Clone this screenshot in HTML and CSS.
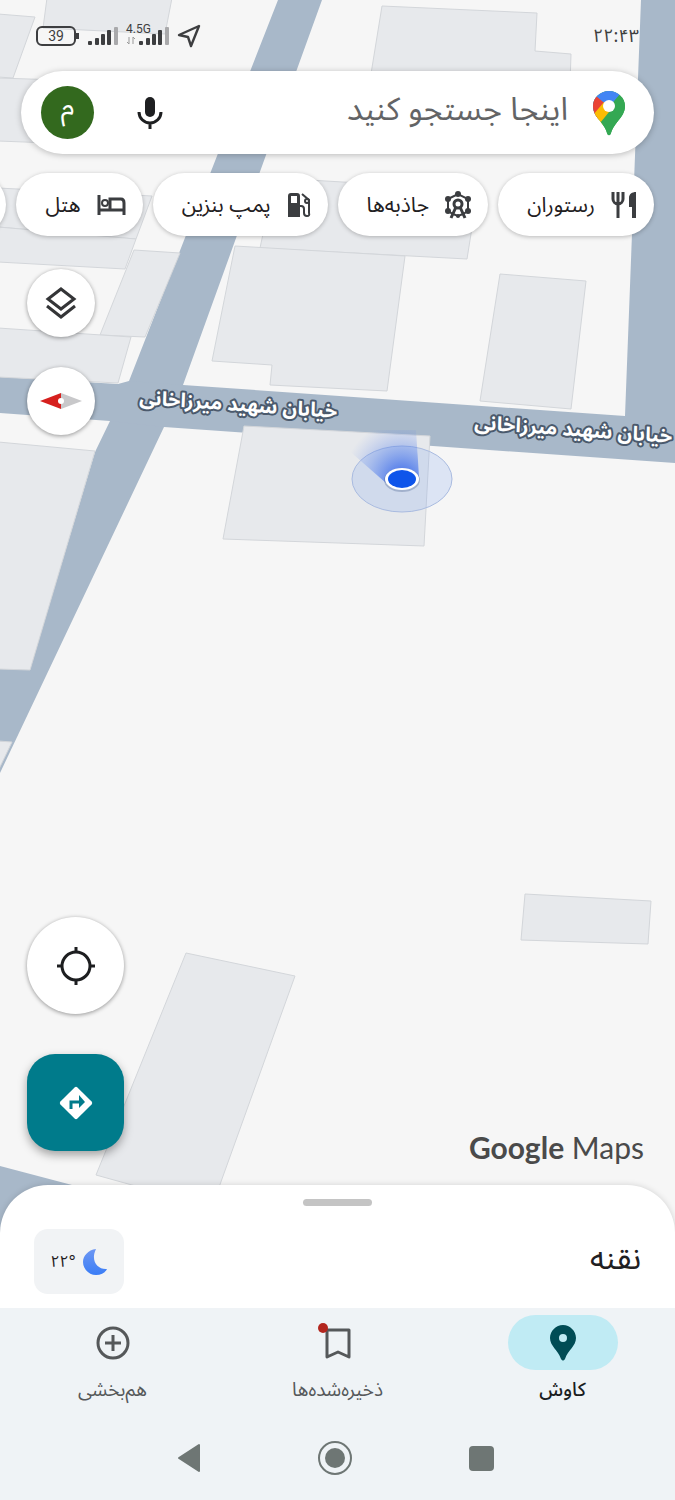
FILE: index.html
```html
<!DOCTYPE html>
<html lang="fa" dir="rtl">

<head>
  <meta charset="UTF-8">
  <meta name="viewport" content="width=device-width, initial-scale=1.0">
  <title>Google Maps</title>
  <link rel="stylesheet" href="styles.css">
</head>

<body>

  <!-- Map background -->
  <svg class="map" viewBox="0 0 675 1500" preserveAspectRatio="xMidYMin slice" role="img" aria-label="نقشه">
    <defs>
      <radialGradient id="beam" gradientUnits="userSpaceOnUse" cx="402" cy="479" r="58">
        <stop offset="0.2" stop-color="#2f62ea" stop-opacity="0.7"></stop>
        <stop offset="0.6" stop-color="#4a78ec" stop-opacity="0.3"></stop>
        <stop offset="1" stop-color="#6f92ee" stop-opacity="0"></stop>
      </radialGradient>
    </defs>

    <g class="road">
      <polygon points="278,0 322,0 183,385 164,427 0,773 0,669 30,669 95,452 110,421 129,381"></polygon>
      <polygon points="0,377 118,384 129,381 183,385 625,416 641,0 675,0 675,463 164,427 110,421 0,413"></polygon>
      <polygon points="0,1166 72,1185 72,1260 0,1260"></polygon>
    </g>

    <g class="building">
      <polygon points="47,-2 172,-2 165,34 43,28"></polygon>
      <polygon points="-2,14 35,17 13,78 -2,77"></polygon>
      <polygon points="-2,78 60,80 50,143 -2,141"></polygon>
      <polygon points="382,6 537,13 535,51 571,54 570,84 370,80"></polygon>
      <polygon points="-2,188 152,196 136,239 -2,227"></polygon>
      <polygon points="-2,227 136,239 125,269 -2,262"></polygon>
      <polygon points="134,250 180,253 145,337 100,335"></polygon>
      <polygon points="275,178 478,190 467,259 260,248"></polygon>
      <polygon points="235,246 405,256 387,391 270,385 272,365 212,361"></polygon>
      <polygon points="500,274 586,281 571,409 480,401"></polygon>
      <polygon points="-2,328 131,337 118,383 -2,377"></polygon>
      <polygon points="-2,442 95,451 30,670 -2,669"></polygon>
      <polygon points="-2,741 12,742 -2,771"></polygon>
      <polygon points="244,426 430,436 424,546 223,539"></polygon>
      <polygon points="525,894 651,901 648,944 521,940"></polygon>
      <polygon points="186,953 295,976 218,1190 150,1190 96,1175"></polygon>
    </g>

    <!-- Current location -->
    <ellipse class="accuracy" cx="402" cy="479" rx="50" ry="33"></ellipse>
    <polygon points="386,483 346,448 362,430 416,430 419,477" fill="url(#beam)"></polygon>
    <ellipse cx="402" cy="480" rx="18" ry="12" fill="#4c6392" opacity="0.35"></ellipse>
    <ellipse cx="402" cy="479" rx="17" ry="11" fill="#fff"></ellipse>
    <ellipse cx="402" cy="479" rx="14" ry="9" fill="#0f55ea"></ellipse>

    <text class="street" x="238" y="411" transform="rotate(4 238 408)">خیابان شهید میرزاخانی</text>
    <text class="street" x="573" y="436" transform="rotate(4 573 433)">خیابان شهید میرزاخانی</text>
  </svg>

  <div class="app">

    <header class="status">
      <time>۲۲:۴۳</time>
      <div class="status-icons">
        <span class="battery">39</span>
        <svg width="30" height="20" viewBox="0 0 30 20">
          <g fill="#3d3e40">
            <rect x="0" y="15" width="4" height="4" rx="1"></rect>
            <rect x="7" y="12" width="4" height="7" rx="1"></rect>
            <rect x="13" y="8" width="4" height="11" rx="1"></rect>
            <rect x="19" y="4" width="4" height="15" rx="1"></rect>
          </g>
          <rect x="26" y="1" width="4" height="18" rx="1" fill="#a9a9ab"></rect>
        </svg>
        <span class="network">
          <span class="network-type">4.5G</span>
          <svg width="43" height="20" viewBox="0 0 43 20">
            <path d="M3 11v7M1 16l2 2M7 18v-7l2 2" fill="none" stroke="#999" stroke-width="1"></path>
            <g fill="#3d3e40">
              <rect x="13" y="15" width="4" height="4" rx="1"></rect>
              <rect x="20" y="12" width="4" height="7" rx="1"></rect>
              <rect x="26" y="8" width="4" height="11" rx="1"></rect>
              <rect x="32" y="4" width="4" height="15" rx="1"></rect>
            </g>
            <rect x="39" y="1" width="4" height="18" rx="1" fill="#a9a9ab"></rect>
          </svg>
        </span>
        <svg width="24" height="24" viewBox="0 0 24 24">
          <path d="M22 2L2 11L11 13L14 22Z" fill="none" stroke="#3d3e40" stroke-width="2.4" stroke-linejoin="round"></path>
        </svg>
      </div>
    </header>

    <form class="search">
      <svg width="34" height="46" viewBox="0 0 34 46">
        <clipPath id="pin">
          <path d="M17 1C8 1 1 8 1 16c0 6 3 10 7 15c4 5 6 8 7 12c1 3 3 3 4 0c1-4 3-7 7-12c4-5 7-9 7-15C33 8 26 1 17 1z"></path>
        </clipPath>
        <g clip-path="url(#pin)">
          <rect width="34" height="46" fill="#34a853"></rect>
          <path d="M-4 36L17 17L28 4H40V-10H-4z" fill="#4285f4"></path>
          <path d="M17 17L4 6L-6 10V30H6z" fill="#ea4335"></path>
          <path d="M1 25L12 12L24 18L8 38z" fill="#fbbc04"></path>
          <path d="M8 33L31 5L42 10V46H8z" fill="#34a853"></path>
        </g>
        <circle cx="17" cy="16" r="6" fill="#fff"></circle>
      </svg>
      <input type="search" placeholder="اینجا جستجو کنید" aria-label="اینجا جستجو کنید">
      <button class="icon-button" type="button" aria-label="جستجوی گفتاری">
        <svg width="26" height="34" viewBox="0 0 26 34">
          <rect x="8" y="1" width="10" height="20" rx="5" fill="#1e1f21"></rect>
          <path d="M2 16a11 11 0 0 0 22 0M13 27v6" fill="none" stroke="#1e1f21" stroke-width="3"></path>
        </svg>
      </button>
      <button class="avatar" type="button">م</button>
    </form>

    <nav class="chips" aria-label="دسته‌ها">
      <button class="chip" type="button">
        <svg width="26" height="28" viewBox="0 0 26 28">
          <path d="M2 1v7a5 5 0 0 0 10 0V1M7 1v26" fill="none" stroke="#3b3d40" stroke-width="3"></path>
          <path d="M18 16V7c0-4 3-6 7-6v26h-4V16z" fill="#3b3d40"></path>
        </svg>
        رستوران
      </button>
      <button class="chip" type="button">
        <svg width="26" height="28" viewBox="0 0 26 28">
          <g fill="none" stroke="#3b3d40" stroke-width="2">
            <path d="M3 8L13 3L23 8V20L18 23L13 25L8 23L3 20z"></path>
            <circle cx="13" cy="13" r="4" fill="#fff" stroke-width="3"></circle>
            <path d="M6 27L11 16M20 27L15 16" stroke-width="3"></path>
          </g>
          <g fill="#3b3d40">
            <circle cx="13" cy="3" r="3"></circle>
            <circle cx="3" cy="8" r="3"></circle>
            <circle cx="23" cy="8" r="3"></circle>
            <circle cx="3" cy="20" r="3"></circle>
            <circle cx="23" cy="20" r="3"></circle>
            <circle cx="13" cy="25" r="2"></circle>
          </g>
        </svg>
        جاذبه‌ها
      </button>
      <button class="chip" type="button">
        <svg width="24" height="26" viewBox="0 0 24 26">
          <path d="M1 25V4q0-3 3-3h6q3 0 3 3v21zM4 4v7h6V4z" fill="#3b3d40" fill-rule="evenodd"></path>
          <path d="M13 14h1q3 0 3 3v4q0 3 3 3t2-3V8L15 2" fill="none" stroke="#3b3d40" stroke-width="2"></path>
          <circle cx="20" cy="9" r="2" fill="none" stroke="#3b3d40" stroke-width="2"></circle>
        </svg>
        پمپ بنزین
      </button>
      <button class="chip" type="button">
        <svg width="29" height="22" viewBox="0 0 29 22">
          <path d="M2 1v20M2 16h25M13 16V5h11q3 0 3 4v12" fill="none" stroke="#3b3d40" stroke-width="3"></path>
          <circle cx="8" cy="9" r="3" fill="none" stroke="#3b3d40" stroke-width="2"></circle>
        </svg>
        هتل
      </button>
      <button class="chip" type="button" aria-label="بیشتر"></button>
    </nav>

    <main class="controls">
      <div class="top-controls">
        <button class="round small" type="button" aria-label="لایه‌ها">
          <svg width="32" height="34" viewBox="0 0 32 34">
            <path d="M16 3L29 13L16 23L3 13z M2 20L16 31L30 20" fill="none" stroke="#343537" stroke-width="3"></path>
          </svg>
        </button>
        <button class="round small" type="button" aria-label="قطب‌نما">
          <svg width="42" height="18" viewBox="0 0 42 18">
            <path d="M0 9L21 1V17z" fill="#d6201e"></path>
            <path d="M42 9L21 1V17z" fill="#c8c8ca"></path>
            <circle cx="21" cy="9" r="3" fill="#fff"></circle>
          </svg>
        </button>
      </div>

      <div class="bottom-controls">
        <p class="brand" dir="ltr"><b>Google</b> Maps</p>
        <div class="actions">
          <button class="round" type="button" aria-label="مکان من">
            <svg width="38" height="38" viewBox="0 0 38 38">
              <g fill="none" stroke="#1d1e20" stroke-width="3">
                <circle cx="19" cy="19" r="14"></circle>
                <path d="M19 0v6M19 32v6M0 19h6M32 19h6"></path>
              </g>
            </svg>
          </button>
          <button class="directions" type="button" aria-label="مسیریابی">
            <svg width="36" height="36" viewBox="0 0 36 36">
              <rect x="6" y="6" width="24" height="24" rx="2" transform="rotate(45 18 18)" fill="#fff"></rect>
              <path d="M13 24v-7h9" fill="none" stroke="#007b8b" stroke-width="3"></path>
              <path d="M21 10l6 7l-6 6z" fill="#007b8b"></path>
            </svg>
          </button>
        </div>
      </div>
    </main>

    <section class="sheet">
      <div class="handle"></div>
      <div class="place">
        <h1>نقنه</h1>
        <div class="weather" dir="ltr">
          <span>۲۲°</span>
          <svg width="26" height="28" viewBox="0 0 26 28">
            <defs>
              <linearGradient id="night" x1="0" y1="0" x2="0" y2="1">
                <stop offset="0" stop-color="#6d97f3"></stop>
                <stop offset="1" stop-color="#3b7df6"></stop>
              </linearGradient>
            </defs>
            <path d="M14 1C6 2 1 8 1 14c0 7 6 13 13 13c5 0 9-2 11-6C16 22 8 13 14 1z" fill="url(#night)"></path>
          </svg>
        </div>
      </div>
    </section>

    <nav class="tabs">
      <a class="tab active" href="#explore">
        <span class="tab-icon">
          <svg width="26" height="36" viewBox="0 0 26 36">
            <path d="M13 0C6 0 0 6 0 13c0 8 8 12 11 21q2 3 4 0c3-9 11-13 11-21C26 6 20 0 13 0zm0 9a4 4 0 1 1 0 8a4 4 0 0 1 0-8z" fill="#004c55"></path>
          </svg>
        </span>
        کاوش
      </a>
      <a class="tab" href="#saved">
        <span class="tab-icon">
          <svg width="40" height="40" viewBox="0 0 40 40">
            <path d="M9 7H31V34L20 29L9 34z" fill="none" stroke="#55585a" stroke-width="3" stroke-linejoin="round"></path>
            <circle cx="5" cy="5" r="5" fill="#b3261e"></circle>
          </svg>
        </span>
        ذخیره‌شده‌ها
      </a>
      <a class="tab" href="#contribute">
        <span class="tab-icon">
          <svg width="36" height="36" viewBox="0 0 36 36">
            <g fill="none" stroke="#55585a" stroke-width="3">
              <circle cx="18" cy="18" r="15"></circle>
              <path d="M18 10v16M10 18h16"></path>
            </g>
          </svg>
        </span>
        هم‌بخشی
      </a>
    </nav>

    <footer class="system">
      <button type="button" aria-label="بازگشت">
        <svg width="36" height="36" viewBox="0 0 36 36">
          <path d="M8 18L28 5V31z" fill="#6e7674" stroke="#6e7674" stroke-width="2" stroke-linejoin="round"></path>
        </svg>
      </button>
      <button type="button" aria-label="خانه">
        <svg width="36" height="36" viewBox="0 0 36 36">
          <circle cx="18" cy="18" r="16" fill="none" stroke="#6e7674" stroke-width="2"></circle>
          <circle cx="18" cy="18" r="10" fill="#6e7674"></circle>
        </svg>
      </button>
      <button type="button" aria-label="برنامه‌های اخیر">
        <svg width="36" height="36" viewBox="0 0 36 36">
          <rect x="6" y="6" width="25" height="25" rx="4" fill="#6e7674"></rect>
        </svg>
      </button>
    </footer>

  </div>

</body>

</html>
```
FILE: styles.css
```css
* {
  box-sizing: border-box;
}

body {
  margin: 0;
  background-color: #f6f6f6;
  color: #1f2022;
  font-family: "Noto Sans", "Noto Sans Arabic", "DejaVu Sans", sans-serif;
  position: relative;
}

button {
  border: 0;
  padding: 0;
  background: none;
  color: inherit;
  font: inherit;
  cursor: pointer;
}

svg {
  display: block;
  flex: none;
}

/* Map */
.map {
  position: absolute;
  inset: 0;
  width: 100%;
  height: 100%;
}

.road {
  fill: #a8b8c9;
}

.building {
  fill: #e7e9ec;
  stroke: #d3d6da;
  stroke-width: 1;
}

.accuracy {
  fill: rgba(120, 160, 240, 0.2);
  stroke: #a9bbe0;
}

.street {
  fill: #fff;
  stroke: #4b5a6d;
  stroke-width: 4;
  stroke-linejoin: round;
  paint-order: stroke;
  font-size: 20px;
  font-weight: bold;
  text-anchor: middle;
}

.app {
  position: relative;
  display: flex;
  flex-direction: column;
  min-height: 100vh;
}

/* Status bar */
.status {
  display: flex;
  justify-content: space-between;
  align-items: center;
  height: 71px;
  padding: 0 36px;
  color: #3d3e40;
  font-size: 18px;
}

.status-icons {
  display: flex;
  align-items: center;
  gap: 8px;
  direction: ltr;
}

.battery {
  position: relative;
  width: 40px;
  height: 20px;
  margin-right: 4px;
  border: 2px solid #3d3e40;
  border-radius: 6px;
  font: 14px/16px Roboto, sans-serif;
  text-align: center;
}

.battery::after {
  content: "";
  position: absolute;
  top: 5px;
  right: -5px;
  width: 3px;
  height: 6px;
  background-color: #3d3e40;
}

.network {
  position: relative;
}

.network-type {
  position: absolute;
  top: -4px;
  left: 0;
  font: 12px/14px Roboto, sans-serif;
}

/* Search */
.search {
  display: flex;
  align-items: center;
  height: 83px;
  margin: 0 21px;
  padding: 0 28px 0 20px;
  background-color: #fff;
  border-radius: 42px;
  box-shadow: 0 1px 6px rgba(0, 0, 0, 0.25);
}

.search input {
  flex: 1;
  min-width: 0;
  margin: 0 24px;
  padding: 0 0 10px;
  border: 0;
  outline: 0;
  background: none;
  font-family: inherit;
  font-size: 32px;
}

.search input::placeholder {
  color: #636466;
  opacity: 1;
}

.icon-button {
  margin-left: 43px;
}

.avatar {
  width: 53px;
  height: 53px;
  padding-bottom: 16px;
  border-radius: 50%;
  background-color: #33691e;
  color: #fff;
  font-size: 28px;
  line-height: 36px;
}

/* Category chips */
.chips {
  display: flex;
  gap: 10px;
  padding: 19px 21px 33px 0;
  overflow: hidden;
}

.chip {
  display: flex;
  flex: none;
  align-items: center;
  gap: 16px;
  height: 63px;
  min-width: 100px;
  padding: 0 17px 0 29px;
  border-radius: 32px;
  background-color: #fff;
  box-shadow: 0 1px 4px rgba(0, 0, 0, 0.25);
  font-size: 21px;
}

/* Map controls */
.controls {
  display: flex;
  flex: 1;
  flex-direction: column;
  justify-content: space-between;
  padding: 0 27px 34px;
}

.top-controls,
.actions {
  display: flex;
  flex-direction: column;
  align-items: flex-end;
}

.top-controls {
  gap: 30px;
}

.actions {
  gap: 40px;
}

.bottom-controls {
  display: flex;
  justify-content: space-between;
  align-items: flex-end;
}

.round,
.directions {
  display: flex;
  align-items: center;
  justify-content: center;
  width: 97px;
  height: 97px;
  border-radius: 50%;
  background-color: #fff;
  box-shadow: 0 1px 4px rgba(0, 0, 0, 0.4);
}

.small {
  width: 68px;
  height: 68px;
}

.directions {
  border-radius: 28px;
  background-color: #007b8b;
  box-shadow: 0 4px 10px rgba(0, 0, 0, 0.35);
}

.brand {
  margin: 0 4px -16px;
  color: #4a4a4a;
  font: 30px/40px Lato, sans-serif;
}

/* Bottom sheet */
.sheet {
  padding: 14px 34px;
  border-radius: 48px 48px 0 0;
  background-color: #fff;
  box-shadow: 0 0 6px rgba(0, 0, 0, 0.15);
}

.handle {
  width: 69px;
  height: 7px;
  margin: 0 auto 23px;
  border-radius: 4px;
  background-color: #c4c4c4;
}

.place {
  display: flex;
  justify-content: space-between;
  align-items: center;
}

.place h1 {
  margin: 0;
  padding-bottom: 10px;
  font-size: 32px;
  font-weight: normal;
  line-height: 40px;
}

.weather {
  display: flex;
  align-items: center;
  justify-content: center;
  gap: 6px;
  width: 90px;
  height: 65px;
  border-radius: 14px;
  background-color: #f1f3f5;
  font-size: 16px;
}

/* Bottom navigation */
.tabs {
  display: flex;
  height: 107px;
  padding-top: 7px;
  background-color: #eff3f6;
}

.tab {
  display: flex;
  flex: 1;
  flex-direction: column;
  align-items: center;
  gap: 4px;
  color: #55585a;
  font-size: 19px;
  line-height: 30px;
  text-decoration: none;
}

.tab-icon {
  display: flex;
  align-items: center;
  justify-content: center;
  width: 110px;
  height: 55px;
  border-radius: 28px;
}

.active {
  color: #1a1c1e;
  font-weight: 500;
}

.active .tab-icon {
  background-color: #c0ebf4;
}

/* System buttons */
.system {
  display: flex;
  justify-content: center;
  gap: 110px;
  height: 85px;
  padding-right: 5px;
  background-color: #eff3f6;
  direction: ltr;
}
```
